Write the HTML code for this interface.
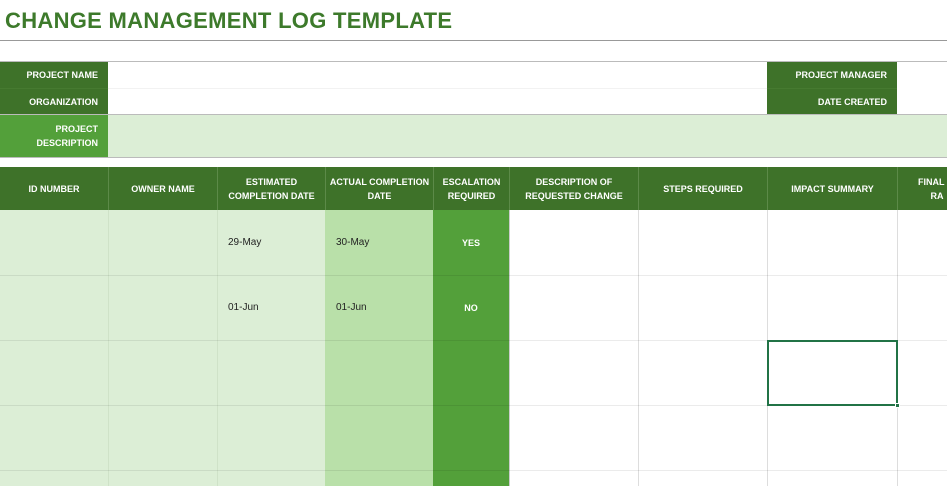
<!DOCTYPE html>
<html><head><meta charset="utf-8"><style>
body{margin:0;width:947px;height:486px;overflow:hidden;background:#fff;font-family:"Liberation Sans",sans-serif;position:relative}
div{position:absolute;box-sizing:border-box}
.t{left:5px;top:8px;font-size:22px;font-weight:bold;color:#3d7a2b;letter-spacing:0.3px;white-space:nowrap}
.d{background:#3e7229;color:#fff;font-size:9px;font-weight:bold;display:flex;align-items:center}
.r{justify-content:flex-end;padding-right:10px;text-align:right}
.c{justify-content:center;text-align:center;line-height:14px}
.v{font-size:10px;color:#222;display:flex;align-items:center;padding-left:11px}
</style></head><body>
<div class="t">CHANGE MANAGEMENT LOG TEMPLATE</div>
<div style="left:0;top:40px;width:947px;height:1px;background:#999"></div>
<div style="left:0;top:61px;width:947px;height:1px;background:#bbb"></div>
<div class="d r" style="left:0;top:62px;width:108px;height:26px">PROJECT NAME</div>
<div class="d r" style="left:0;top:88px;width:108px;height:26px;border-top:1px solid #467a30">ORGANIZATION</div>
<div class="d r" style="left:767px;top:62px;width:130px;height:26px">PROJECT MANAGER</div>
<div class="d r" style="left:767px;top:88px;width:130px;height:26px;border-top:1px solid #467a30">DATE CREATED</div>
<div style="left:108px;top:88px;width:659px;height:1px;background:#f2f2f2"></div>
<div style="left:0;top:114px;width:947px;height:1px;background:#bbb"></div>
<div style="left:0;top:115px;width:947px;height:42px;background:#dceed6"></div>
<div class="d r" style="left:0;top:115px;width:108px;height:42px;background:#53a03a;line-height:14px">PROJECT<br>DESCRIPTION</div>
<div style="left:0;top:157px;width:947px;height:1px;background:#bbb"></div>

<div style="left:0;top:167px;width:947px;height:43px;background:#3e7229"></div>
<div class="d c" style="left:0;top:167px;width:108px;height:43px">ID NUMBER</div>
<div class="d c" style="left:108px;top:167px;width:109px;height:43px;border-left:1px solid #5c8a48">OWNER NAME</div>
<div class="d c" style="left:217px;top:167px;width:108px;height:43px;border-left:1px solid #5c8a48">ESTIMATED<br>COMPLETION DATE</div>
<div class="d c" style="left:325px;top:167px;width:108px;height:43px;border-left:1px solid #5c8a48">ACTUAL COMPLETION<br>DATE</div>
<div class="d c" style="left:433px;top:167px;width:76px;height:43px;border-left:1px solid #5c8a48">ESCALATION<br>REQUIRED</div>
<div class="d c" style="left:509px;top:167px;width:129px;height:43px;border-left:1px solid #5c8a48">DESCRIPTION OF<br>REQUESTED CHANGE</div>
<div class="d c" style="left:638px;top:167px;width:129px;height:43px;border-left:1px solid #5c8a48">STEPS REQUIRED</div>
<div class="d c" style="left:767px;top:167px;width:130px;height:43px;border-left:1px solid #5c8a48">IMPACT SUMMARY</div>
<div class="d" style="left:897px;top:167px;width:60px;height:43px;border-left:1px solid #5c8a48;padding-left:20px;line-height:14px;white-space:nowrap">FINAL<br>&nbsp;&nbsp;&nbsp;&nbsp;&nbsp;RA</div>

<div style="left:0;top:210px;width:325px;height:276px;background:#dceed6"></div>
<div style="left:325px;top:210px;width:108px;height:276px;background:#b9e0a9"></div>
<div style="left:433px;top:210px;width:76px;height:276px;background:#53a03a"></div>
<div style="left:108px;top:210px;width:1px;height:276px;background:#cfe2c8"></div>
<div style="left:217px;top:210px;width:1px;height:276px;background:#cfe2c8"></div>
<div style="left:638px;top:210px;width:1px;height:276px;background:#ddd"></div>
<div style="left:767px;top:210px;width:1px;height:276px;background:#ddd"></div>
<div style="left:897px;top:210px;width:1px;height:276px;background:#ddd"></div>
<div style="left:509px;top:210px;width:1px;height:276px;background:#ccc"></div>
<div style="left:0;top:275px;width:947px;height:1px;background:rgba(0,0,0,0.08)"></div>
<div style="left:0;top:340px;width:947px;height:1px;background:rgba(0,0,0,0.08)"></div>
<div style="left:0;top:405px;width:947px;height:1px;background:rgba(0,0,0,0.08)"></div>
<div style="left:0;top:470px;width:947px;height:1px;background:rgba(0,0,0,0.08)"></div>

<div class="v" style="left:217px;top:210px;width:108px;height:65px">29-May</div>
<div class="v" style="left:325px;top:210px;width:108px;height:65px">30-May</div>
<div class="d c" style="left:433px;top:210px;width:76px;height:65px;background:none">YES</div>
<div class="v" style="left:217px;top:275px;width:108px;height:65px">01-Jun</div>
<div class="v" style="left:325px;top:275px;width:108px;height:65px">01-Jun</div>
<div class="d c" style="left:433px;top:275px;width:76px;height:65px;background:none">NO</div>

<div style="left:767px;top:340px;width:131px;height:66px;border:2px solid #217346"></div>
<div style="left:895px;top:403px;width:5px;height:5px;background:#217346;border:1px solid #fff"></div>
</body></html>
